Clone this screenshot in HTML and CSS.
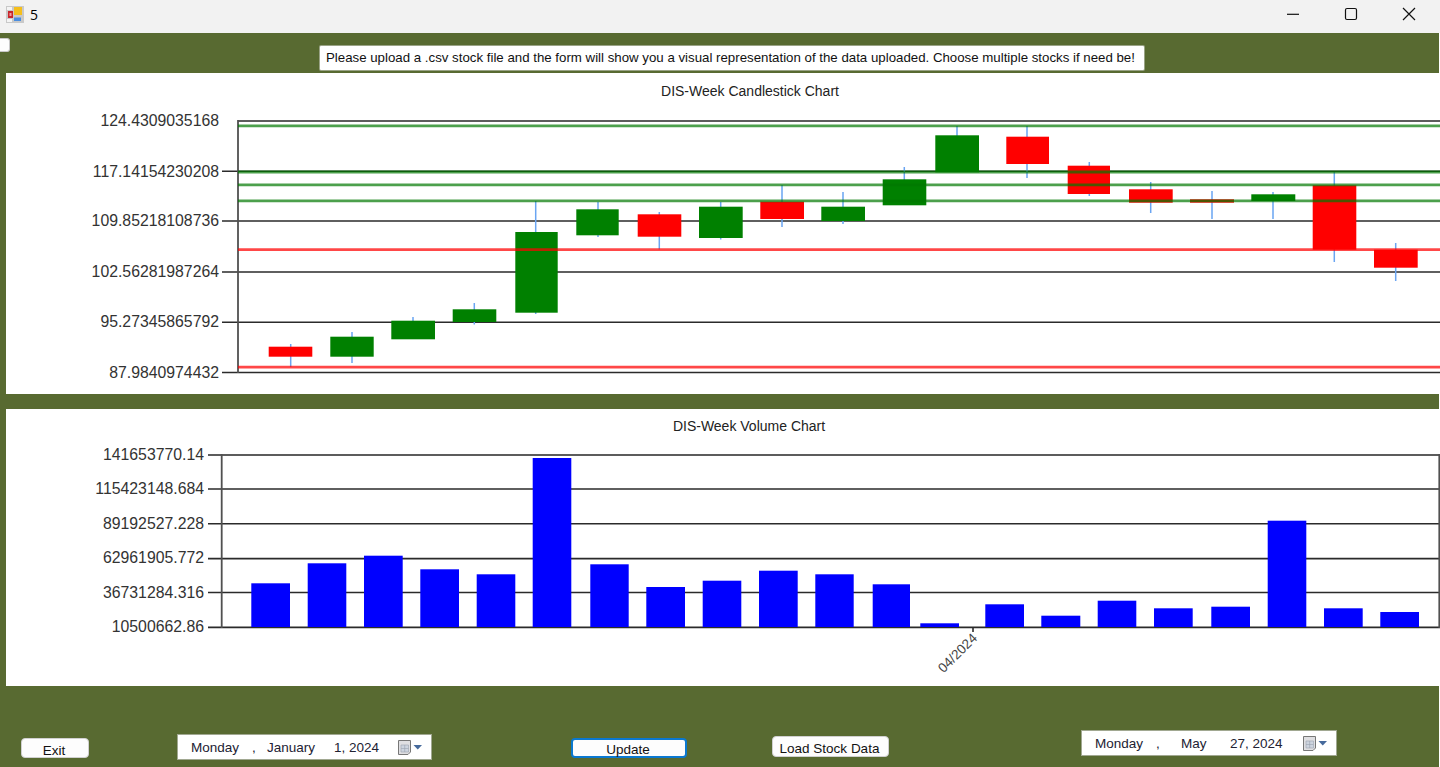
FILE: index.html
```html
<!DOCTYPE html>
<html lang="en">
<head>
<meta charset="utf-8">
<title>5</title>
<link rel="stylesheet" href="styles.css">
</head>
<body>
<div class="window">
  <header class="titlebar">
    <svg class="app-icon" viewBox="6 5 18 17" width="18" height="17">
      <rect x="6" y="5" width="18" height="17" fill="#c9c9c9"/>
      <rect x="7" y="6" width="5" height="3" fill="#f4f4f4"/>
      <rect x="7" y="18" width="5" height="3" fill="#f4f4f4"/>
      <rect x="8" y="10" width="5" height="7" fill="#c8262c"/>
      <rect x="9.5" y="12" width="2" height="3" fill="#f0a0a0"/>
      <rect x="14" y="6" width="8" height="8" fill="#f5bf1c"/>
      <rect x="14" y="16.5" width="7" height="3.5" fill="#4a8ee0"/>
    </svg>
    <span class="app-title">5</span>
    <div class="win-controls">
      <svg class="win-btn" viewBox="0 0 14 14" width="14" height="14"><path d="M1 7.3H13" /></svg>
      <svg class="win-btn" viewBox="0 0 14 14" width="14" height="14"><rect x="1.5" y="1.5" width="11" height="11" rx="1.5"/></svg>
      <svg class="win-btn" viewBox="0 0 14 14" width="14" height="14"><path d="M1 1L13 13M13 1L1 13"/></svg>
    </div>
  </header>

  <main class="form">
    <div class="top-row">
      <span class="stub"></span>
      <p class="message">Please upload a .csv stock file and the form will show you a visual representation of the data uploaded. Choose multiple stocks if need be!</p>
    </div>

    <section class="panel panel-candle">
      <svg class="chart" viewBox="6 73 1434 321" width="1434" height="321">
        <text class="chart-title" x="750" y="96">DIS-Week Candlestick Chart</text>

        <path class="grid-top" d="M238 121H1440"/>
        <path class="grid" d="M222 171.2H1440M222 221H1440M222 272H1440M222 322.3H1440M222 372.5H1440"/>
        <path class="axis" d="M238 120V373"/>

        <text class="tick" x="219" y="126">124.4309035168</text>
        <text class="tick" x="219" y="177">117.14154230208</text>
        <text class="tick" x="219" y="226">109.85218108736</text>
        <text class="tick" x="219" y="277">102.56281987264</text>
        <text class="tick" x="219" y="327">95.27345865792</text>
        <text class="tick" x="219" y="378">87.9840974432</text>

        <path class="wick" d="M290.7 344V367M352 332V363M413 317V321M474.3 303V324.5M535.7 201V314M598 202V237M659.3 212V249.5M720.7 202V239.5M782 185V227M843 192V224M904.3 167V180M957 126V136M1027 126V178M1089.3 162V196M1150.7 182V213M1212 191V219M1273 192V219M1334.3 172V262M1395.7 243V281"/>

        <rect class="down" x="268.7" y="346.7" width="43.6" height="10"/>
        <rect class="up" x="330.3" y="336.7" width="43.4" height="20"/>
        <rect class="up" x="391.3" y="320.7" width="43.7" height="18.6"/>
        <rect class="up" x="452.7" y="309.3" width="43.6" height="12.7"/>
        <rect class="up" x="515.3" y="232" width="42.4" height="80.7"/>
        <rect class="up" x="576.3" y="209.3" width="42.4" height="26"/>
        <rect class="down" x="637.7" y="214.3" width="43.6" height="22.4"/>
        <rect class="up" x="699" y="206.7" width="43.7" height="31.3"/>
        <rect class="down" x="760.3" y="201.7" width="43.7" height="17.3"/>
        <rect class="up" x="821.3" y="206.7" width="43.7" height="14.3"/>
        <rect class="up" x="882.7" y="179.3" width="43.6" height="26"/>
        <rect class="up" x="935.3" y="135.3" width="43.7" height="37"/>
        <rect class="down" x="1006.3" y="136.7" width="42.7" height="27.3"/>
        <rect class="down" x="1067.7" y="165.7" width="42.3" height="28.3"/>
        <rect class="down" x="1129" y="189.3" width="43.7" height="13.4"/>
        <rect class="down" x="1190" y="199.3" width="44" height="3.4"/>
        <rect class="up" x="1251.3" y="194.3" width="44" height="6.7"/>
        <rect class="down" x="1312.7" y="185.3" width="43.6" height="64.4"/>
        <rect class="down" x="1374" y="249.7" width="43.7" height="18"/>

        <path class="level-up" d="M238 125.8H1440M238 172H1440M238 184.8H1440M238 200.8H1440"/>
        <path class="level-down" d="M238 249.7H1440M238 367.2H1440"/>
      </svg>
    </section>

    <section class="panel panel-volume">
      <svg class="chart" viewBox="6 409 1434 277" width="1434" height="277">
        <text class="chart-title" x="749" y="431">DIS-Week Volume Chart</text>

        <path class="grid-top" d="M208 455H1440"/>
        <path class="grid" d="M208 489H1440M208 523.8H1440M208 558.6H1440M208 592.5H1440M208 627.4H1440"/>
        <path class="axis" d="M221.7 454V628M1439.3 454V628"/>
        <path class="grid" d="M973 627V632"/>

        <text class="tick" x="204" y="459.5">141653770.14</text>
        <text class="tick" x="204" y="494">115423148.684</text>
        <text class="tick" x="204" y="529">89192527.228</text>
        <text class="tick" x="204" y="563">62961905.772</text>
        <text class="tick" x="204" y="597.5">36731284.316</text>
        <text class="tick" x="204" y="632">10500662.86</text>

        <rect class="bar" x="251.3" y="583.3" width="38.7" height="43.7"/>
        <rect class="bar" x="307.7" y="563.3" width="38.6" height="63.7"/>
        <rect class="bar" x="364" y="555.7" width="38.7" height="71.3"/>
        <rect class="bar" x="420.3" y="569.3" width="38.7" height="57.7"/>
        <rect class="bar" x="476.7" y="574.3" width="38.6" height="52.7"/>
        <rect class="bar" x="532.7" y="458" width="38.6" height="169"/>
        <rect class="bar" x="590.3" y="564.3" width="38.4" height="62.7"/>
        <rect class="bar" x="646.3" y="587" width="38.7" height="40"/>
        <rect class="bar" x="702.7" y="580.7" width="38.6" height="46.3"/>
        <rect class="bar" x="759" y="570.7" width="38.7" height="56.3"/>
        <rect class="bar" x="815.3" y="574.3" width="38.4" height="52.7"/>
        <rect class="bar" x="872.7" y="584.3" width="37.3" height="42.7"/>
        <rect class="bar" x="920.3" y="623.3" width="38.7" height="3.7"/>
        <rect class="bar" x="985.3" y="604.3" width="38.7" height="22.7"/>
        <rect class="bar" x="1041.3" y="615.7" width="39" height="11.3"/>
        <rect class="bar" x="1097.7" y="600.7" width="38.6" height="26.3"/>
        <rect class="bar" x="1154" y="608.3" width="38.7" height="18.7"/>
        <rect class="bar" x="1211.3" y="606.7" width="38.7" height="20.3"/>
        <rect class="bar" x="1267.7" y="520.7" width="38.6" height="106.3"/>
        <rect class="bar" x="1324" y="608.3" width="38.7" height="18.7"/>
        <rect class="bar" x="1380.3" y="612" width="38.7" height="15"/>

        <text class="date-label" transform="rotate(-45 978 639)" x="978" y="639">04/2024</text>
      </svg>
    </section>

    <div class="controls">
      <button class="btn btn-exit" type="button">Exit</button>
      <div class="picker picker-start">
        <span class="p-day">Monday</span><span class="p-comma">,</span><span class="p-month">January</span><span class="p-date">1, 2024</span>
        <svg class="cal" viewBox="0 0 24 15" width="24" height="15">
          <path class="cal-page" d="M.5.5H12.5V12L10 14.5H.5Z"/>
          <path class="cal-grid" d="M3 5H10.5V12H3ZM3 8.5H10.5M6.7 5V12"/>
          <path class="cal-arrow" d="M15.5 5H24L19.75 9.5Z"/>
        </svg>
      </div>
      <button class="btn btn-update" type="button">Update</button>
      <button class="btn btn-load" type="button">Load Stock Data</button>
      <div class="picker picker-end">
        <span class="p-day">Monday</span><span class="p-comma">,</span><span class="p-month">May</span><span class="p-date">27, 2024</span>
        <svg class="cal" viewBox="0 0 24 15" width="24" height="15">
          <path class="cal-page" d="M.5.5H12.5V12L10 14.5H.5Z"/>
          <path class="cal-grid" d="M3 5H10.5V12H3ZM3 8.5H10.5M6.7 5V12"/>
          <path class="cal-arrow" d="M15.5 5H24L19.75 9.5Z"/>
        </svg>
      </div>
    </div>
  </main>
</div>
</body>
</html>
```

FILE: styles.css
```css
* { box-sizing: border-box; }

html, body {
  margin: 0;
  height: 767px;
  overflow: hidden;
  background: #fff;
}

body {
  font-family: "Liberation Sans", Arial, sans-serif;
  font-size: 13.5px;
  color: #111;
}

.window {
  display: flex;
  flex-direction: column;
  width: 1440px;
  height: 767px;
}

/* Title bar */
.titlebar {
  display: flex;
  align-items: center;
  flex: 0 0 33px;
  padding: 0 0 5px 6px;
  background: #f2f2f2;
}

.app-icon { flex: none; }

.app-title {
  margin-left: 6px;
  font-family: "Open Sans", sans-serif;
  font-size: 14px;
  color: #000;
}

.win-controls {
  display: flex;
  gap: 44px;
  margin-left: auto;
  padding-right: 24px;
}

.win-btn {
  fill: none;
  stroke: #111;
  stroke-width: 1.2;
}

/* Form */
.form {
  flex: 1;
  width: 1439px;
  background: #586a31;
  display: flex;
  flex-direction: column;
}

.top-row {
  display: flex;
  align-items: flex-start;
  flex: 0 0 40px;
}

.stub {
  flex: none;
  width: 10px;
  height: 14px;
  margin-top: 5px;
  background: #fdfdfd;
  border-radius: 0 3px 3px 0;
  border: 1px solid #c8c8c8;
  border-left: 0;
}

.message {
  width: 824px;
  height: 24px;
  margin: 13px 0 0 310px;
  padding: 0 0 0 6px;
  font-size: 13.28px;
  line-height: 24px;
  white-space: nowrap;
  background: #fff;
  border-radius: 1px;
  box-shadow: 0 0 0 1px rgba(220, 220, 220, .5);
  color: #111;
}

.panel {
  flex: none;
  width: 1434px;
  margin-left: 6px;
  background: #fff;
}

.panel-candle { height: 321px; }

.panel-volume {
  height: 277px;
  margin-top: 15px;
}

.chart {
  display: block;
  font-family: "Liberation Sans", Arial, sans-serif;
}

.chart-title {
  font-size: 14px;
  text-anchor: middle;
  fill: #222;
}

.tick {
  font-size: 15.8px;
  text-anchor: end;
  fill: #333;
}

.date-label {
  font-size: 13.5px;
  text-anchor: end;
  fill: #444;
}

.grid { fill: none; stroke: #2b2b2b; stroke-width: 1.6; }
.grid-top { fill: none; stroke: #5c5c5c; stroke-width: 1.8; }
.axis { fill: none; stroke: #505050; stroke-width: 1.8; }
.wick { fill: none; stroke: #6aa5f2; stroke-width: 1.5; }
.up { fill: #008000; }
.down { fill: #ff0000; }
.bar { fill: #0000ff; }
.level-up { fill: none; stroke: rgba(0, 120, 0, .7); stroke-width: 2.8; }
.level-down { fill: none; stroke: rgba(255, 0, 0, .72); stroke-width: 2.8; }

/* Bottom controls */
.controls {
  display: flex;
  align-items: flex-start;
  flex: 1;
  padding-left: 21px;
}

.btn {
  flex: none;
  height: 20px;
  padding: 0 2px 0 0;
  font: inherit;
  line-height: 20px;
  color: #111;
  background: #fdfdfd;
  border: 1px solid #d0d0d0;
  border-radius: 4px;
}

.btn-exit {
  width: 68px;
  margin-top: 52px;
  padding-top: 2px;
}

.btn-update {
  width: 116px;
  margin: 52px 0 0 140px;
  border: 2px solid #0a78d0;
  line-height: 16px;
  padding-top: 2px;
}

.btn-load {
  width: 117px;
  height: 21px;
  margin: 50px 0 0 85px;
  padding-top: 2px;
}

.picker {
  flex: none;
  display: flex;
  align-items: center;
  height: 24px;
  width: 253px;
  background: #fff;
  box-shadow: 0 0 0 1px rgba(210, 210, 210, .6);
  color: #223;
}

.picker-start {
  margin: 49px 0 0 89px;
  padding-left: 13px;
}

.picker-end {
  margin: 45px 0 0 193px;
  padding-left: 13px;
  width: 254px;
}

.p-day { flex: none; width: 61px; }
.p-comma { flex: none; width: 15px; }

.picker-end .p-comma { width: 25px; }

.picker-start .p-month { flex: none; width: 67px; }
.picker-end .p-month { flex: none; width: 49px; }

.picker-start .p-date { flex: none; width: 64px; }
.picker-end .p-date { flex: none; width: 73px; }

.cal { flex: none; }
.cal-page { fill: #dfdfe2; stroke: #777; }
.cal-grid { fill: #cdd4df; stroke: #9aa3b0; stroke-width: .6; }
.cal-arrow { fill: #466a9c; }
```
